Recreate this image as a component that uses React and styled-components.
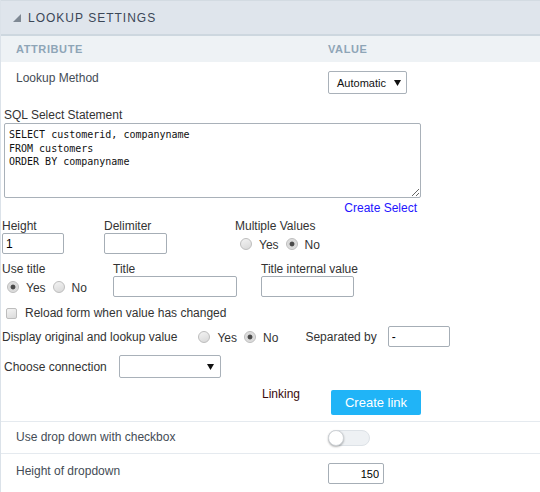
import React from 'react'
import styled, { createGlobalStyle } from 'styled-components'

const GlobalStyle = createGlobalStyle`
  body {
    margin: 0;
    background: #ffffff;
    font-family: "Liberation Sans", Arial, sans-serif;
  }
`

function Radio({ on, label }) {
  return (
    <RadioOption>
      <RadioDot $on={on} />
      <span>{label}</span>
    </RadioOption>
  )
}

function YesNo({ value, indent }) {
  return (
    <RadioGroup $indent={indent}>
      <Radio on={value === 'yes'} label="Yes" />
      <Radio on={value === 'no'} label="No" />
    </RadioGroup>
  )
}

function Caret() {
  return (
    <svg width="8" height="8" viewBox="0 0 8 8">
      <polygon points="8,0 8,8 0,8" fill="#7e8893" />
    </svg>
  )
}

function Arrow() {
  return (
    <svg width="7" height="6" viewBox="0 0 7 6">
      <polygon points="0,0 7,0 3.5,6" fill="#111" />
    </svg>
  )
}

export default function App() {
  return (
    <Panel>
      <GlobalStyle />
      <Header>
        <Caret />
        <HeaderTitle>LOOKUP SETTINGS</HeaderTitle>
      </Header>
      <TableHead>
        <HeadCell>ATTRIBUTE</HeadCell>
        <HeadCell>VALUE</HeadCell>
      </TableHead>

      <AttrRow $top={9} $bottom={14}>
        <AttrLabel>Lookup Method</AttrLabel>
        <SelectBox $w={79} $pl={8} $pr={5}>
          Automatic <Arrow />
        </SelectBox>
      </AttrRow>

      {/* lookup form */}
      <FormBlock>
        <SqlSection>
          <FormLabel>SQL Select Statement</FormLabel>
          <SqlArea
            spellCheck={false}
            defaultValue={'SELECT customerid, companyname\nFROM customers\nORDER BY companyname'}
          />
          <LinkLine>
            <BlueLink>Create Select</BlueLink>
          </LinkLine>
        </SqlSection>

        <FieldRow $mt={5}>
          <Field $w={102}>
            <FieldLabel>Height</FieldLabel>
            <TextInput $w={62} defaultValue="1" />
          </Field>
          <Field $w={131}>
            <FieldLabel>Delimiter</FieldLabel>
            <TextInput $w={63} />
          </Field>
          <Field>
            <FieldLabel>Multiple Values</FieldLabel>
            <YesNo value="no" indent={5} />
          </Field>
        </FieldRow>

        <FieldRow $mt={8}>
          <Field $w={111}>
            <FieldLabel $lh={14}>Use title</FieldLabel>
            <YesNo value="yes" indent={5} />
          </Field>
          <Field $w={148}>
            <FieldLabel $lh={14}>Title</FieldLabel>
            <TextInput $w={124} />
          </Field>
          <Field>
            <FieldLabel $lh={14}>Title internal value</FieldLabel>
            <TextInput $w={93} />
          </Field>
        </FieldRow>

        <CheckRow>
          <CheckBox />
          <span>Reload form when value has changed</span>
        </CheckRow>

        <InlineRow $mt={6} $pl={1}>
          <InlineText $mr={21}>Display original and lookup value</InlineText>
          <YesNo value="no" />
          <InlineText $ml={27} $mr={11}>Separated by</InlineText>
          <TextInput $w={62} defaultValue="-" />
        </InlineRow>

        <InlineRow $mt={8} $pl={3}>
          <InlineText $mr={12}>Choose connection</InlineText>
          <SelectBox $w={102} $pl={8} $pr={6}>
            <span />
            <Arrow />
          </SelectBox>
        </InlineRow>

        <LinkingRow>
          <LinkingText>Linking</LinkingText>
          <BlueButton>Create link</BlueButton>
        </LinkingRow>
      </FormBlock>

      <AttrRow $line $top={8} $bottom={7}>
        <AttrLabel>Use drop down with checkbox</AttrLabel>
        <Toggle>
          <Knob />
        </Toggle>
      </AttrRow>

      <AttrRow $line $top={9} $bottom={8}>
        <AttrLabel $pt={1}>Height of dropdown</AttrLabel>
        <TextInput $w={56} $right $small defaultValue="150" />
      </AttrRow>
    </Panel>
  )
}

//styling:
const Panel = styled.div`
  width: 540px;
  min-height: 492px;
  box-sizing: border-box;
  border-left: 1px solid #dbe2e9;
  color: #333;
  font-size: 12px;
`

const Header = styled.div`
  height: 33px;
  display: flex;
  align-items: center;
  gap: 7px;
  padding-left: 12px;
  background-color: #dfe5ec;
  border-top: 1px solid #d3dbe2;
  border-bottom: 2px solid #cdd7df;
`
const HeaderTitle = styled.span`
  font-size: 12px;
  line-height: 14px;
  letter-spacing: 1px;
  color: #3b4757;
`

const TableHead = styled.div`
  height: 26px;
  display: grid;
  grid-template-columns: 312px 1fr;
  align-items: center;
  padding-left: 15px;
  background-color: #eef2f5;
`
const HeadCell = styled.span`
  font-size: 11px;
  font-weight: bold;
  letter-spacing: 0.6px;
  color: #8ea5b7;
`

const AttrRow = styled.div`
  display: grid;
  grid-template-columns: 312px 1fr;
  align-items: start;
  padding: ${p => p.$top}px 0 ${p => p.$bottom}px 15px;
  border-top: ${p => (p.$line ? '1px solid #e5eaef' : 'none')};
`
const AttrLabel = styled.span`
  font-size: 12px;
  line-height: 14px;
  padding-top: ${p => p.$pt || 0}px;
  color: #444c56;
`

const SelectBox = styled.div`
  box-sizing: border-box;
  width: ${p => p.$w}px;
  height: 23px;
  display: flex;
  align-items: center;
  justify-content: space-between;
  padding: 0 ${p => p.$pr}px 0 ${p => p.$pl}px;
  border: 1px solid #a9b1b9;
  border-radius: 2px;
  background: #fff;
  font-size: 11px;
  color: #111;
`

const FormBlock = styled.div`
  display: flex;
  flex-direction: column;
  align-items: flex-start;
  padding: 0 0 6px 0;
`
const SqlSection = styled.div`
  width: 417px;
  margin-left: 3px;
  display: flex;
  flex-direction: column;
`
const FormLabel = styled.span`
  line-height: 14px;
  color: #333;
`
const SqlArea = styled.textarea`
  box-sizing: border-box;
  width: 417px;
  height: 75px;
  margin: 1px 0 0;
  padding: 4px 4px;
  border: 1px solid #a9b1b9;
  border-radius: 2px;
  font-family: "DejaVu Sans Mono", "Liberation Mono", monospace;
  font-size: 10px;
  line-height: 13.5px;
  color: #111;
  outline: none;
`
const LinkLine = styled.div`
  margin-top: 3px;
  padding-right: 4px;
  text-align: right;
  line-height: 14px;
`
const BlueLink = styled.span`
  color: #2314ff;
  cursor: pointer;
`

const FieldRow = styled.div`
  display: flex;
  align-items: flex-start;
  margin-top: ${p => p.$mt}px;
  padding-left: 1px;
`
const Field = styled.div`
  width: ${p => (p.$w ? `${p.$w}px` : 'auto')};
  display: flex;
  flex-direction: column;
  align-items: flex-start;
`
const FieldLabel = styled.span`
  line-height: ${p => p.$lh || 13}px;
  color: #333;
`
const TextInput = styled.input`
  box-sizing: border-box;
  width: ${p => p.$w}px;
  height: 21px;
  margin: 0;
  padding: 0 ${p => (p.$right ? 4 : 3)}px;
  border: 1px solid #a6aeb6;
  border-radius: 2px;
  font-family: "Liberation Sans", Arial, sans-serif;
  font-size: ${p => (p.$small ? 11 : 12)}px;
  text-align: ${p => (p.$right ? 'right' : 'left')};
  color: #000;
  outline: none;
`

const RadioGroup = styled.div`
  height: 21px;
  display: flex;
  align-items: center;
  gap: 7px;
  padding-left: ${p => p.$indent || 0}px;
`
const RadioOption = styled.label`
  display: inline-flex;
  align-items: center;
  gap: 7px;
  color: #333;
  span {
    padding-top: 3px;
  }
`
const RadioDot = styled.span`
  box-sizing: border-box;
  width: 12px;
  height: 12px;
  flex: none;
  border-radius: 50%;
  border: 1px solid #bdbdbd;
  background: ${p =>
    p.$on
      ? 'radial-gradient(circle, #4a4a4a 0 2px, #d6d6d6 2.8px, #e9e9e9 100%)'
      : 'linear-gradient(160deg, #f3f3f3, #d8d8d8)'};
`

const CheckRow = styled.label`
  display: flex;
  align-items: center;
  gap: 8px;
  margin: 9px 0 0 5px;
  line-height: 14px;
  color: #333;
`
const CheckBox = styled.span`
  box-sizing: border-box;
  width: 11px;
  height: 11px;
  border: 1px solid #bdbdbd;
  border-radius: 2px;
  background: linear-gradient(160deg, #f4f4f4, #dadada);
`

const InlineRow = styled.div`
  display: flex;
  align-items: center;
  margin-top: ${p => p.$mt}px;
  padding-left: ${p => p.$pl}px;
`
const InlineText = styled.span`
  margin: 0 ${p => p.$mr || 0}px 0 ${p => p.$ml || 0}px;
  color: #333;
`

const LinkingRow = styled.div`
  display: flex;
  align-items: flex-start;
  gap: 31px;
  margin-top: 9px;
  padding-left: 261px;
`
const LinkingText = styled.span`
  line-height: 14px;
  color: #3a0b0b;
`
const BlueButton = styled.button`
  width: 90px;
  height: 25px;
  margin-top: 3px;
  border: none;
  border-radius: 2px;
  background-color: #20b4f7;
  color: #ffffff;
  font-family: "Liberation Sans", Arial, sans-serif;
  font-size: 13px;
  cursor: pointer;
`

const Toggle = styled.span`
  box-sizing: border-box;
  width: 42px;
  height: 16px;
  display: flex;
  align-items: center;
  border-radius: 8px;
  border: 1px solid #dde2e7;
  background-color: #eef1f4;
`
const Knob = styled.span`
  box-sizing: border-box;
  width: 16px;
  height: 16px;
  margin-left: -1px;
  border-radius: 50%;
  border: 1px solid #cfd3d7;
  background: #ffffff;
  box-shadow: 0 1px 2px rgba(0, 0, 0, 0.3);
`
